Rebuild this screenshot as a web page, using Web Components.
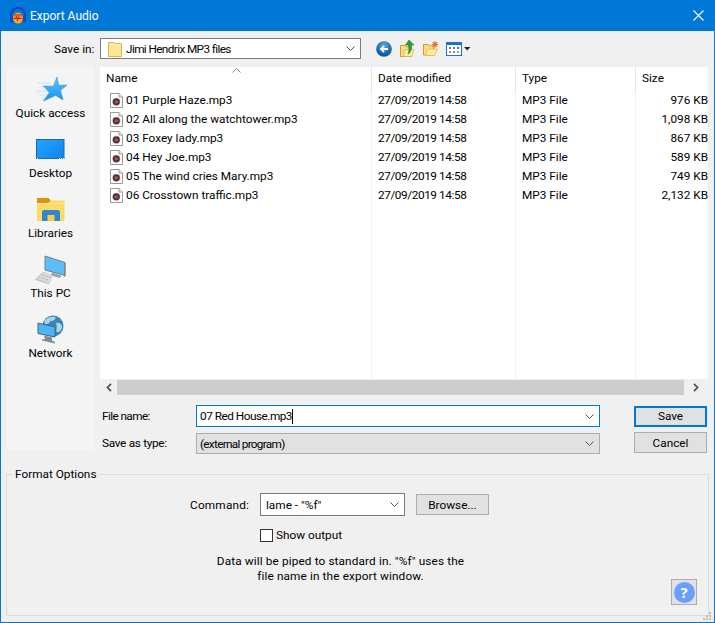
<!DOCTYPE html>
<html lang="en"><head><meta charset="utf-8"><title>Export Audio</title>
<style>
html,body{margin:0;padding:0;background:#f0f0f0}
body{font:11.8px/16px Roboto,"Liberation Sans",sans-serif;color:#000;width:715px;height:623px;overflow:hidden}
</style></head><body>
<export-dialog></export-dialog>
<script>
const ICONS={
 app:`<svg width="18" height="18" viewBox="0 0 18 18"><path d="M2 11V8a7 7 0 0 1 14 0v3" fill="none" stroke="#1446c8" stroke-width="2.2"/><rect x="1" y="9" width="3.4" height="6.5" rx="1.5" fill="#1446c8"/><rect x="13.6" y="9" width="3.4" height="6.5" rx="1.5" fill="#1446c8"/><ellipse cx="9" cy="11" rx="5" ry="5.6" fill="#f4b400"/><path d="M4.3 9.5h9.4L12.8 7H5.2z" fill="#e8552a"/><path d="M4.5 11.5h2l1-1.5 1 3 1-2.5 1 1h3" fill="none" stroke="#d8141c" stroke-width="1.2"/></svg>`,
 star:`<svg width="32" height="26" viewBox="0 0 32 26"><defs><linearGradient id="s" x1="0" y1="0" x2="0" y2="1"><stop offset="0" stop-color="#5cc6fb"/><stop offset="1" stop-color="#1b93ea"/></linearGradient></defs><path d="M3 6h12M6 10h8M1 14h11M4 18h8M7 22h5" stroke="#bfe4fb" stroke-width="1"/><path d="M22 0l1.800 8.200 8.200-.2-6.400 5.600L28 23l-7.400-4.600L8.500 24l5.800-8.500-6-6.500 10 .2z" fill="url(#s)" stroke="#2a8fdc" stroke-width=".5"/></svg>`,
 desktop:`<svg width="30" height="22" viewBox="0 0 30 22"><defs><linearGradient id="d" x1="0" y1="0" x2="1" y2="1"><stop offset="0" stop-color="#27a3ff"/><stop offset="1" stop-color="#0d84ea"/></linearGradient></defs><rect x=".5" y=".5" width="27.500" height="19" fill="url(#d)" stroke="#0e6eb0"/><path d="M1 19.500h1m21 0h1m1 0h1m1 0h1" stroke="#fff"/></svg>`,
 lib:`<svg width="30" height="26" viewBox="0 0 30 26"><path d="M1 1h11l3 2.500h13.500V24H1z" fill="#ffd966"/><path d="M1 1h11.500l2 2.500-2 2.500H1z" fill="#d9950b"/><path d="M1 6h27.500v1H1z" fill="#ffe89a"/><path d="M6 24V15a2 2 0 0 1 2-2h14a2 2 0 0 1 2 2v9z" fill="#2f87cf"/><rect x="11.500" y="18" width="7" height="6" fill="#ffcb45"/></svg>`,
 pc:`<svg width="34" height="31" viewBox="0 0 34 31"><path d="M11 1l20 6.500v13L11 15z" fill="#5dbdf9" stroke="#74818c"/><path d="M31.500 7.500v13.500l-1.500 1v-14z" fill="#7d8a94"/><path d="M18 17.500l9 3-1 2.500-9-2.500z" fill="#98a2aa"/><path d="M9 17l9.500 3.500L15 29 1 24.500z" fill="#d8dcdf" stroke="#b2b8bd" stroke-width=".5"/><path d="M7 19.500l9 3M5 22l9 3M3.500 24.500l9 3" stroke="#a7adb2" stroke-dasharray="1 .7"/></svg>`,
 net:`<svg width="30" height="30" viewBox="0 0 30 30"><circle cx="17" cy="11" r="10.500" fill="#3c84b4"/><path d="M9 5c3-3 7-4 10-3 2 2-2 4-4 4s-1 3-4 3-3-2-2-4zm11 3c3-1 6 1 6 4 0 3-3 6-5 5s1-4-1-9z" fill="#a5d6ea"/><path d="M2 8l17 4v10L2 18.500z" fill="#4ab6f8" stroke="#56606a"/><path d="M8 20.500l8 2v3l3 1.500v1.500l-13-3v-1.500l3 .5z" fill="#7e8b95"/></svg>`,
 file:`<svg width="13" height="15" viewBox="0 0 13 15"><path d="M.5.500h8.500l3.500 3.500v10.500H.5z" fill="#fff" stroke="#9a9a9a"/><path d="M9 .5V4h3.500" fill="#eee" stroke="#9a9a9a"/><circle cx="6.300" cy="8.800" r="4" fill="#c79ac0"/><circle cx="6.300" cy="8.800" r="3.400" fill="#3b3436"/><circle cx="6.300" cy="8.800" r="1.600" fill="#d96a3c"/><circle cx="6.300" cy="8.800" r=".6" fill="#2b1f24"/></svg>`,
 folder:`<svg width="14" height="16" viewBox="0 0 14 16"><path d="M.5 1.500h5l1.500 1h6.500v13H.5z" fill="#fbe69a" stroke="#d9b64c"/><path d="M1 3.500h12" stroke="#fff3c4"/></svg>`,
 back:`<svg width="16" height="16" viewBox="0 0 16 16"><defs><radialGradient id="b" cx=".5" cy=".3" r=".8"><stop offset="0" stop-color="#5fb0e4"/><stop offset=".6" stop-color="#1b68a8"/><stop offset="1" stop-color="#0d3f70"/></radialGradient></defs><circle cx="8" cy="8" r="7.800" fill="url(#b)"/><path d="M12 8H5.500M8 5L5 8l3 3" fill="none" stroke="#fff" stroke-width="1.800"/></svg>`,
 up:`<svg width="15" height="17" viewBox="0 0 15 17"><path d="M.5 5.500h5l1 1.500h4.500v9.500H.5z" fill="#f8dd80" stroke="#c99f35"/><path d="M3 16.500l2-7h9l-2 7z" fill="#fbe99f" stroke="#d2ac48" stroke-width=".6"/><path d="M9 0l5 5h-2.500c.5 4-1 8-3.500 9 1-3 1.500-6 0-9H5.500z" fill="#2f9e2c" stroke="#1f7d20" stroke-width=".5"/></svg>`,
 newf:`<svg width="16" height="15" viewBox="0 0 16 15"><path d="M.5 3.500h5l1 1.500h4v9H.5z" fill="#f8dd80" stroke="#c99f35"/><path d="M2.500 14.500l2-6.500h10l-3 6.500z" fill="#fbe99f" stroke="#d2ac48" stroke-width=".6"/><circle cx="12" cy="3.500" r="2.400" fill="#f2843a"/><path d="M12 0v7M8.500 3.500h7M9.500 1l5 5M14.500 1l-5 5" stroke="#e9682a" stroke-width=".7"/></svg>`,
 view:`<svg width="25" height="14" viewBox="0 0 25 14"><rect x=".5" y=".5" width="15" height="13" fill="#fff" stroke="#1c6fd0"/><rect x="0" y="0" width="16" height="3" fill="#1c6fd0"/><g><rect x="3" y="5" width="2" height="2" fill="#4a7fd0"/><rect x="7" y="5" width="2" height="2" fill="#3c9f4e"/><rect x="11" y="5" width="2" height="2" fill="#3f6fc4"/><rect x="3" y="9" width="2" height="2" fill="#e0803a"/><rect x="7" y="9" width="2" height="2" fill="#5a92d8"/><rect x="11" y="9" width="2" height="2" fill="#d2a03c"/></g><path d="M18 5h6.500l-3.250 3.500z" fill="#222"/></svg>`,
 chev:`<svg width="9" height="5" viewBox="0 0 9 5"><path d="M.5.500l4 4 4-4" fill="none" stroke="#555"/></svg>`,
 sort:`<svg width="9" height="5" viewBox="0 0 9 5"><path d="M.5 4.500l4-4 4 4" fill="none" stroke="#8a8a8a"/></svg>`,
 left:`<svg width="6" height="9" viewBox="0 0 6 9"><path d="M5 .8L1.500 4.500 5 8.200" fill="none" stroke="#555" stroke-width="1.800"/></svg>`,
 right:`<svg width="6" height="9" viewBox="0 0 6 9"><path d="M1 .8l3.500 3.700L1 8.200" fill="none" stroke="#555" stroke-width="1.800"/></svg>`,
 close:`<svg width="11" height="11" viewBox="0 0 11 11"><path d="M.5.500l10 10m0-10l-10 10" stroke="#fff" stroke-width="1.100"/></svg>`,
 grip:`<svg width="10" height="10" viewBox="0 0 10 10" fill="#bdbdbd"><rect x="7" y="1" width="2" height="2"/><rect x="4" y="4" width="2" height="2"/><rect x="7" y="4" width="2" height="2"/><rect x="1" y="7" width="2" height="2"/><rect x="4" y="7" width="2" height="2"/><rect x="7" y="7" width="2" height="2"/></svg>`
};
function def(name,css,html,extra){
 customElements.define(name,class extends HTMLElement{
  constructor(){super();const r=this.attachShadow({mode:'open'});
   r.innerHTML=`<style>${css}</style>`+(typeof html==='function'?html(this):html);}
  connectedCallback(){ if(extra) extra(this); }
 });
}
def('win-icon',':host{display:inline-flex;line-height:0}',"<span id='i'></span>",el=>{el.shadowRoot.getElementById('i').innerHTML=ICONS[el.getAttribute('name')]||''});
def('title-bar',`:host{display:flex;align-items:center;height:31px;background:#0078d7;color:#fff;padding:0 10px 0 8px;flex:none;font-size:12px}
 .t{margin-left:3px;flex:1}`,`<win-icon name="app"></win-icon><span class="t"><slot></slot></span><win-icon name="close"></win-icon>`);
def('win-combo',`:host{display:flex;align-items:center;box-sizing:border-box;height:var(--h,22px);width:var(--w,100px);border:1px solid var(--bc,#7a7a7a);background:var(--bg,#fff);padding:0 5px 0 var(--pl,6px)}
 .t{flex:1;white-space:nowrap;overflow:hidden;display:flex;align-items:center}`,`<span class="t"><slot></slot></span><win-icon name="chev"></win-icon>`);
def('win-button',`:host{display:flex;align-items:center;justify-content:center;box-sizing:border-box;width:var(--w,73px);height:var(--h,21px);background:#e1e1e1;border:var(--bw,1px) solid var(--bc,#adadad)}`,`<slot></slot>`);
def('place-item',`:host{display:flex;flex-direction:column;align-items:center;height:60px;box-sizing:border-box;padding-top:7px;width:100%}
 .i{height:32px;display:flex;align-items:center;justify-content:center}
 .l{height:14px;line-height:14px}`,`<div class="i"><slot name="icon"></slot></div><div class="l"><slot></slot></div>`);
def('places-bar',`:host{display:flex;flex-direction:column;width:87px;height:383px;background:#f4f4f4;flex:none;box-sizing:border-box}`,`<slot></slot>`);
const COLS='272px 144px 120px 72px';
def('list-head',`:host{display:grid;grid-template-columns:${COLS};height:24px;background:#fff;flex:none;position:relative}
 ::slotted(span){padding-left:6px;line-height:23px;box-sizing:border-box;border-right:1px solid #e5e5e5}
 ::slotted(span:last-child){border-right:0}
 .s{position:absolute;left:132px;top:1px;line-height:0}`,`<slot></slot><span class="s"><win-icon name="sort"></win-icon></span>`);
def('file-row',`:host{display:grid;grid-template-columns:${COLS};height:19px;line-height:19px;flex:none}
 .n{display:flex;align-items:center;padding-left:10px;gap:3px}
 .d{letter-spacing:-.42px}
 .d,.y{padding-left:6px}.z{text-align:right}`,el=>`<div class="n"><win-icon name="file"></win-icon><span>${el.getAttribute('n')}</span></div><div class="d">${el.getAttribute('d')}</div><div class="y">MP3 File</div><div class="z">${el.getAttribute('s')}</div>`);
def('file-list',`:host{display:flex;flex-direction:column;height:312px;width:608px;background:#fff;flex:none;
 background-image:linear-gradient(#edf2f9,#edf2f9),linear-gradient(#edf2f9,#edf2f9),linear-gradient(#edf2f9,#edf2f9);background-size:1px 100%;background-position:271px 0,415px 0,535px 0;background-repeat:no-repeat}`,`<slot></slot>`);
def('h-scroll',`:host{display:flex;align-items:center;height:15px;margin-top:1px;width:608px;flex:none}
 .a{width:17px;display:flex;justify-content:center;flex:none}
 .t{width:567px;height:15px;background:#cdcdcd;flex:none}
 .b{flex:1;display:flex;justify-content:center}`,`<div class="a"><win-icon name="left"></win-icon></div><div class="t"></div><div class="b"><win-icon name="right"></win-icon></div>`);
def('form-row',`:host{display:flex;align-items:center;flex:none}
 .l{width:96px;flex:none;padding-left:2px;box-sizing:border-box}
 .f{flex:none}.b{flex:none;margin-left:auto;margin-right:1px}`,`<span class="l"><slot name="label"></slot></span><span class="f"><slot name="field"></slot></span><span class="b"><slot name="btn"></slot></span>`);
def('format-options',`:host{display:block;flex:none;margin:0 5px 0 5px}
 fieldset{margin:0;border:1px solid #dcdcdc;padding:0;height:150px;box-sizing:border-box;display:flex;min-width:0}
 legend{padding:0 2px;margin-left:6px;line-height:16px}
 .wrap{display:flex;width:100%;height:100%}
 .c{flex:1;min-width:0;padding-top:11px}
 .r1{display:flex;align-items:center;gap:11px;padding-left:183px;height:23px}
 .r1 .cmd{width:60px;letter-spacing:.2px}
 .r2{display:flex;align-items:center;gap:3px;margin-top:12px;padding-left:253px;height:14px}
 .box{width:13px;height:13px;box-sizing:border-box;border:1px solid #333;background:#fff;flex:none}
 .p{margin:12px 0 0 0;width:667px;text-align:center;line-height:15px;letter-spacing:.12px}
 .h{align-self:flex-end;margin:0 11px 10px 0;flex:none}
 .q{box-sizing:border-box;width:26px;height:26px;background:#e1e1e1;border:1px solid #adadad;display:flex;align-items:center;justify-content:center}
 .o{width:21px;height:21px;border-radius:50%;background:#6b9eff;color:#fff;font:bold 15px/21px "Open Sans",sans-serif;text-align:center}`,
 `<fieldset><legend>Format Options</legend><div class="wrap"><div class="c">
 <div class="r1"><span class="cmd">Command:</span><win-combo style="--w:145px;--h:23px;--pl:5px;margin-left:-1px">lame - "%f"</win-combo><win-button style="--w:73px;--h:21px">Browse...</win-button></div>
 <div class="r2"><span class="box"></span><span>Show output</span></div>
 <p class="p">Data will be piped to standard in. "%f" uses the<br>file name in the export window.</p>
 </div><div class="h"><div class="q"><div class="o">?</div></div></div></div></fieldset>`);
def('save-in-row',`:host{display:flex;align-items:center;height:21px;flex:none;padding-left:53px}
 .l{width:46px;flex:none}
 .tools{display:flex;align-items:center;margin-left:15px;gap:8px}
 .fi{margin-right:4px;display:inline-flex}
 .v{letter-spacing:-.62px}`,`<span class="l">Save in:</span><win-combo style="--w:261px;--h:21px;--pl:7px;--bc:#7a7a7a"><span class="fi"><win-icon name="folder"></win-icon></span><span class="v">Jimi Hendrix MP3 files</span></win-combo>
 <div class="tools"><win-icon name="back"></win-icon><win-icon name="up"></win-icon><win-icon name="newf"></win-icon><win-icon name="view" style="margin-left:-1px"></win-icon></div>`);
const FILES=[['01 Purple Haze.mp3','976 KB'],['02 All along the watchtower.mp3','1,098 KB'],['03 Foxey lady.mp3','867 KB'],['04 Hey Joe.mp3','589 KB'],['05 The wind cries Mary.mp3','749 KB'],['06 Crosstown traffic.mp3','2,132 KB']];
const PLACES=[['star','Quick access'],['desktop','Desktop'],['lib','Libraries'],['pc','This PC'],['net','Network']];
def('export-dialog',`:host{display:flex;flex-direction:column;box-sizing:border-box;width:715px;height:623px;background:#f0f0f0;border:1px solid #0078d7;border-top:0;position:relative}
 .top{padding-top:7px}
 .main{display:flex;margin-top:8px;padding-left:6px;gap:6px;height:384px;flex:none}
 .right{display:flex;flex-direction:column;flex:none}
 .rows{display:flex;flex-direction:column;gap:6px;margin-top:10px;width:608px}
 .grip{position:absolute;right:2px;bottom:1px;line-height:0}
 .spc{height:15px;flex:none}`,
 `<title-bar>Export Audio</title-bar>
 <div class="top"><save-in-row></save-in-row></div>
 <div class="main"><places-bar>${PLACES.map(p=>`<place-item><win-icon slot="icon" name="${p[0]}"></win-icon>${p[1]}</place-item>`).join('')}</places-bar>
 <div class="right"><file-list><list-head><span>Name</span><span>Date modified</span><span>Type</span><span>Size</span></list-head>
 ${FILES.map(f=>`<file-row n="${f[0]}" d="27/09/2019 14:58" s="${f[1]}"></file-row>`).join('')}</file-list>
 <h-scroll></h-scroll>
 <div class="rows">
 <form-row><span slot="label" style="letter-spacing:-.6px">File name:</span><win-combo slot="field" style="--w:404px;--h:22px;--bc:#0078d7;--pl:3px"><span style="letter-spacing:-.5px">07 Red House.mp3</span><span style="display:inline-block;width:1px;height:15px;background:#000"></span></win-combo><win-button slot="btn" style="--bw:2px;--bc:#0078d7;--w:73px;--h:21px">Save</win-button></form-row>
 <form-row><span slot="label" style="letter-spacing:-.3px;position:relative;top:-1px">Save as type:</span><win-combo slot="field" style="--w:404px;--h:21px;--bg:#e1e1e1;--bc:#adadad;--pl:3px"><span style="letter-spacing:-.72px">(external program)</span></win-combo><win-button slot="btn" style="--w:73px;--h:21px;margin-top:-2px">Cancel</win-button></form-row>
 </div></div></div>
 <div class="spc"></div>
 <format-options></format-options>
 <div class="grip"><win-icon name="grip"></win-icon></div>`);
</script>
</body></html>
